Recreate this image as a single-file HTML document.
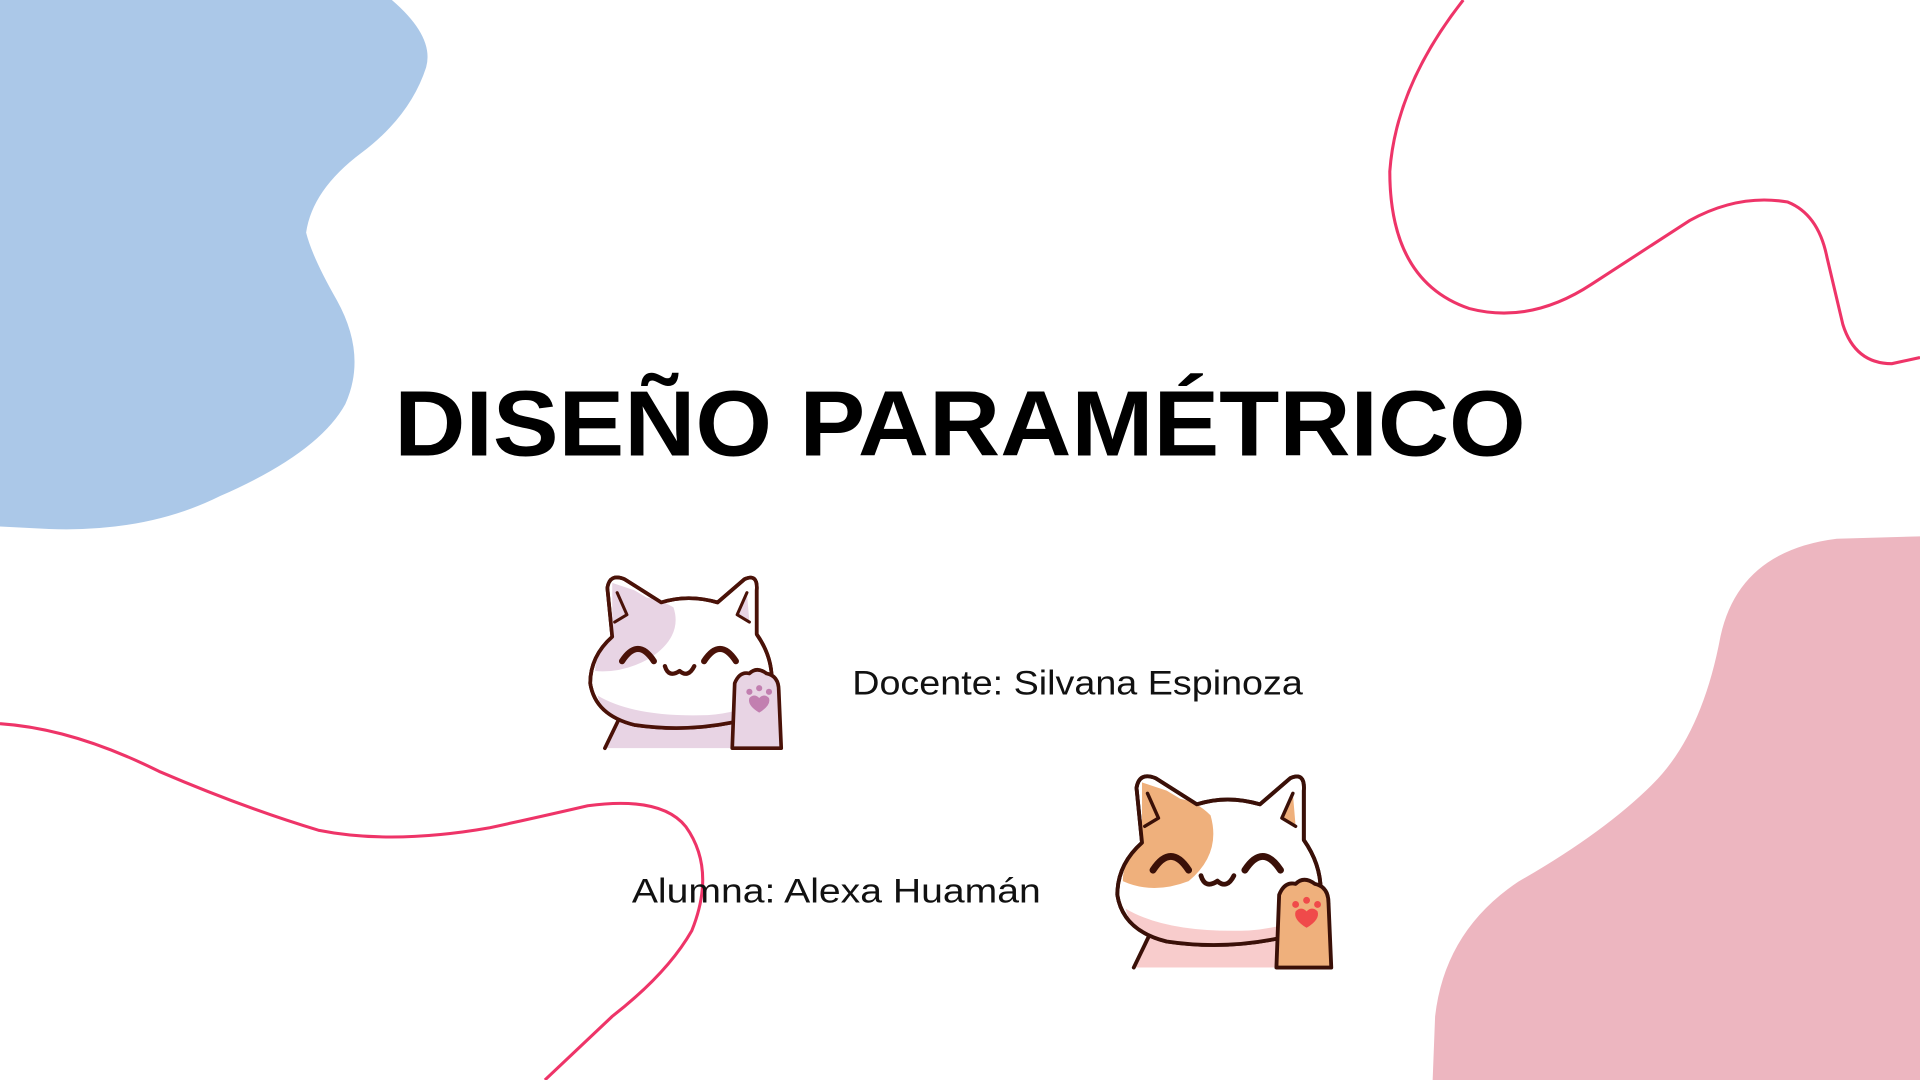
<!DOCTYPE html>
<html><head><meta charset="utf-8"><style>
html,body{margin:0;padding:0;background:#fff;overflow:hidden}
svg{display:block}
</style></head><body>
<svg width="1920" height="1080" viewBox="0 0 1568 882" xmlns="http://www.w3.org/2000/svg">
<rect width="1568" height="882" fill="#fff"/>
<path d="M0,0 L320,0 Q355,30 348,55 Q335,95 295,125 Q255,155 250,190 Q255,210 275,245 Q300,290 282,330 Q260,370 180,405 Q120,435 40,432 L0,430 Z" fill="#abc8e8"/>
<path d="M1568,438 L1500,440 Q1420,450 1405,520 Q1390,600 1350,640 Q1310,680 1240,720 Q1180,760 1172,830 L1170,882 L1568,882 Z" fill="#edb6c0"/>
<path d="M1195,0 Q1140,70 1135,140 Q1135,230 1200,252 Q1250,265 1300,232 L1380,180 Q1420,158 1460,165 Q1485,175 1492,210 L1505,265 Q1515,297 1545,297 L1568,292" fill="none" stroke="#ee3468" stroke-width="2.5"/>
<path d="M0,591 Q60,595 130,630 Q200,660 260,678 Q320,690 400,676 Q450,665 480,658 Q540,650 560,675 Q585,710 565,760 Q545,795 500,830 L445,882" fill="none" stroke="#ee3468" stroke-width="2.5"/>

<text x="784" y="372" text-anchor="middle" font-family="Liberation Sans, sans-serif" font-weight="bold" font-size="76" textLength="924" lengthAdjust="spacingAndGlyphs" fill="#000">DISEÑO PARAMÉTRICO</text>
<text x="696" y="567" font-family="Liberation Sans, sans-serif" font-size="28" textLength="368" lengthAdjust="spacingAndGlyphs" fill="#111">Docente: Silvana Espinoza</text>
<text x="516" y="737" font-family="Liberation Sans, sans-serif" font-size="28" textLength="334" lengthAdjust="spacingAndGlyphs" fill="#111">Alumna: Alexa Huamán</text>

<g transform="translate(478,468)" stroke="#4a1208" stroke-width="3" stroke-linejoin="round" stroke-linecap="round">
  <path d="M16,143 L30,112 L120,112 L120,143 Z" fill="#e8d4e4" stroke="none"/>
  <path d="M16,143 L30,114" fill="none"/>
  <path d="M22,52 L18,12 Q20,0 32,5 L62,24 Q84,17 108,24 L130,5 Q141,0 140,14 L140,50 Q154,70 152,92 Q148,116 120,122 Q80,130 40,124 Q8,116 4,90 Q4,68 22,52 Z" fill="#fff"/>
  <path d="M8,80 Q30,82 52,70 Q80,52 72,28 Q62,22 50,20 L40,14 L22,8 L22,52 Q8,64 8,80 Z" fill="#e8d4e4" stroke="none"/>
  <path d="M10,100 Q40,118 100,116 Q130,114 150,100 Q146,116 120,122 Q80,130 40,124 Q14,118 10,100 Z" fill="#e8d4e4" stroke="none"/>
  <path d="M22,52 L18,12 Q20,0 32,5 L62,24 Q84,17 108,24 L130,5 Q141,0 140,14 L140,50 Q154,70 152,92 Q148,116 120,122 Q80,130 40,124 Q8,116 4,90 Q4,68 22,52 Z" fill="none"/>
  <path d="M26,16 L34,34 L24,40" fill="#e8d4e4" stroke-width="2.5"/>
  <path d="M132,16 L124,34 L134,40" fill="#e8d4e4" stroke-width="2.5"/>
  <path d="M30,72 Q43,52 56,72" fill="none" stroke-width="5"/>
  <path d="M97,72 Q110,52 123,72" fill="none" stroke-width="5"/>
  <path d="M65,76 Q68,86 77,80 Q84,86 89,76" fill="none" stroke-width="3.5"/>
  <path d="M120,143 L122,90 Q126,80 134,82 Q140,76 148,82 Q158,84 158,96 L160,143 Z" fill="#e8d4e4"/>
  <circle cx="134" cy="97" r="2.5" fill="#c27fb0" stroke="none"/>
  <circle cx="142" cy="94" r="2.5" fill="#c27fb0" stroke="none"/>
  <circle cx="150" cy="97" r="2.5" fill="#c27fb0" stroke="none"/>
  <path d="M142,114 Q132,108 134,102 Q138,98 142,102 Q146,98 150,102 Q152,108 142,114 Z" fill="#c27fb0" stroke="none"/>
</g>

<g transform="translate(908,630) scale(1.12)" stroke="#3a1008" stroke-width="2.8" stroke-linejoin="round" stroke-linecap="round">
  <path d="M16,143 L30,112 L120,112 L120,143 Z" fill="#f8cccc" stroke="none"/>
  <path d="M16,143 L30,114" fill="none"/>
  <path d="M22,52 L18,12 Q20,0 32,5 L62,24 Q84,17 108,24 L130,5 Q141,0 140,14 L140,50 Q154,70 152,92 Q148,116 120,122 Q80,130 40,124 Q8,116 4,90 Q4,68 22,52 Z" fill="#fff"/>
  <path d="M8,80 Q30,90 56,80 Q80,60 72,32 Q62,22 50,20 L40,14 L22,8 L22,52 Q8,64 8,80 Z" fill="#efb07c" stroke="none"/>
  <path d="M10,100 Q40,118 100,116 Q130,114 150,100 Q146,116 120,122 Q80,130 40,124 Q14,118 10,100 Z" fill="#f8cccc" stroke="none"/>
  <path d="M22,52 L18,12 Q20,0 32,5 L62,24 Q84,17 108,24 L130,5 Q141,0 140,14 L140,50 Q154,70 152,92 Q148,116 120,122 Q80,130 40,124 Q8,116 4,90 Q4,68 22,52 Z" fill="none"/>
  <path d="M26,16 L34,34 L24,40" fill="#efb07c" stroke-width="2.5"/>
  <path d="M132,16 L124,34 L134,40" fill="#efb07c" stroke-width="2.5"/>
  <path d="M30,72 Q43,52 56,72" fill="none" stroke-width="5"/>
  <path d="M97,72 Q110,52 123,72" fill="none" stroke-width="5"/>
  <path d="M65,76 Q68,86 77,80 Q84,86 89,76" fill="none" stroke-width="3.5"/>
  <path d="M120,143 L122,90 Q126,80 134,82 Q140,76 148,82 Q158,84 158,96 L160,143 Z" fill="#efb07c"/>
  <circle cx="134" cy="97" r="2.5" fill="#f04a4a" stroke="none"/>
  <circle cx="142" cy="94" r="2.5" fill="#f04a4a" stroke="none"/>
  <circle cx="150" cy="97" r="2.5" fill="#f04a4a" stroke="none"/>
  <path d="M142,114 Q132,108 134,102 Q138,98 142,102 Q146,98 150,102 Q152,108 142,114 Z" fill="#f04a4a" stroke="none"/>
</g>
</svg>
</body></html>
